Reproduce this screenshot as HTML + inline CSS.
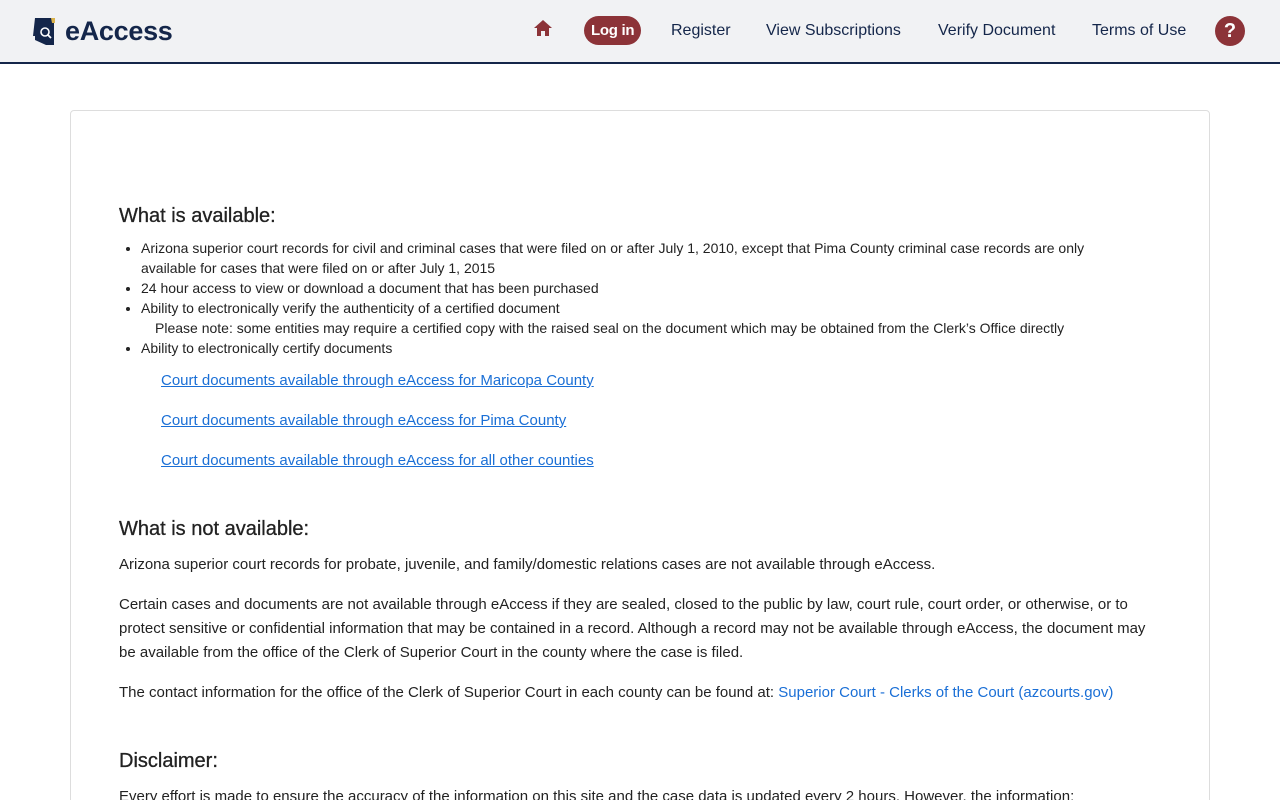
<!DOCTYPE html>
<html><head><meta charset="utf-8"><style>
*{box-sizing:border-box}
html,body{height:800px;overflow:hidden}
body{margin:0;background:#fff;font-family:"Liberation Sans",Arial,sans-serif;color:#222;width:1280px;position:relative}
.hdr{height:64px;background:#f1f2f4;border-bottom:2px solid #14264a;position:relative}
.logo{position:absolute;left:33px;top:16px;display:flex;align-items:center}
.logo span{font-weight:bold;font-size:27px;color:#14264a;margin-left:6px;letter-spacing:-0.3px}
.nav{position:absolute;top:0;height:62px;font-size:16px;color:#14264a}
.nav a{position:absolute;white-space:nowrap}
.login{background:#8c3338;color:#fff;border-radius:15px;padding:6px 7px;font-weight:bold;font-size:15px;letter-spacing:-0.3px}
.help{width:30px;height:30px;border-radius:50%;background:#8c3338;color:#fff;font-weight:bold;font-size:20px;text-align:center;line-height:30px}
.card{position:absolute;left:70px;top:110px;width:1140px;height:720px;border:1px solid #ddd;border-radius:4px}
h2{position:absolute;left:119px;margin:0;font-size:20px;font-weight:normal;color:#222;-webkit-text-stroke:0.3px #222}
ul{position:absolute;left:123px;top:238px;margin:0;padding-left:18px;font-size:14px;line-height:20px;width:980px}
.note{padding-left:14px;list-style:none}
.lnk{position:absolute;left:161px;font-size:15px;color:#1a6fd6;text-decoration:underline}
p{position:absolute;left:119px;margin:0;font-size:15px;line-height:24px;width:1040px}
p a{color:#1a6fd6}
</style></head><body>
<div class="hdr">
 <div class="logo">
  <svg width="26" height="30" viewBox="0 0 26 30"><path d="M2 1h17l2 3 0 24-8 0-11-5 0-4-2 0z" fill="#14264a"/><path d="M18 1l4 0 0 5-3 0z" fill="#d9b24c"/><circle cx="12" cy="15" r="4" fill="none" stroke="#fff" stroke-width="1.6"/><path d="M15 18l3 3" stroke="#fff" stroke-width="1.8"/></svg>
  <span>eAccess</span>
 </div>
 <div class="nav" style="left:0;width:1280px">
  <a style="left:533px;top:19px"><svg width="20" height="18" viewBox="0 0 20 18"><path d="M10 1L1 9h3v8h4v-5h4v5h4V9h3z" fill="#8c3338"/></svg></a>
  <a class="login" style="left:584px;top:16px">Log in</a>
  <a style="left:671px;top:22px">Register</a>
  <a style="left:766px;top:22px">View Subscriptions</a>
  <a style="left:938px;top:22px">Verify Document</a>
  <a style="left:1092px;top:22px">Terms of Use</a>
  <a class="help" style="left:1215px;top:16px">?</a>
 </div>
</div>
<div class="card"></div>
<h2 style="top:205px">What is available:</h2>
<ul>
<li>Arizona superior court records for civil and criminal cases that were filed on or after July 1, 2010, except that Pima County criminal case records are only available for cases that were filed on or after July 1, 2015</li>
<li>24 hour access to view or download a document that has been purchased</li>
<li>Ability to electronically verify the authenticity of a certified document</li>
<li class="note">Please note: some entities may require a certified copy with the raised seal on the document which may be obtained from the Clerk’s Office directly</li>
<li>Ability to electronically certify documents</li>
</ul>
<a class="lnk" style="top:372px">Court documents available through eAccess for Maricopa County</a>
<a class="lnk" style="top:412px">Court documents available through eAccess for Pima County</a>
<a class="lnk" style="top:452px">Court documents available through eAccess for all other counties</a>
<h2 style="top:518px">What is not available:</h2>
<p style="top:553px">Arizona superior court records for probate, juvenile, and family/domestic relations cases are not available through eAccess.</p>
<p style="top:593px">Certain cases and documents are not available through eAccess if they are sealed, closed to the public by law, court rule, court order, or otherwise, or to protect sensitive or confidential information that may be contained in a record. Although a record may not be available through eAccess, the document may be available from the office of the Clerk of Superior Court in the county where the case is filed.</p>
<p style="top:681px">The contact information for the office of the Clerk of Superior Court in each county can be found at: <a>Superior Court - Clerks of the Court (azcourts.gov)</a></p>
<h2 style="top:750px">Disclaimer:</h2>
<p style="top:785px">Every effort is made to ensure the accuracy of the information on this site and the case data is updated every 2 hours. However, the information:</p>
</body></html>
